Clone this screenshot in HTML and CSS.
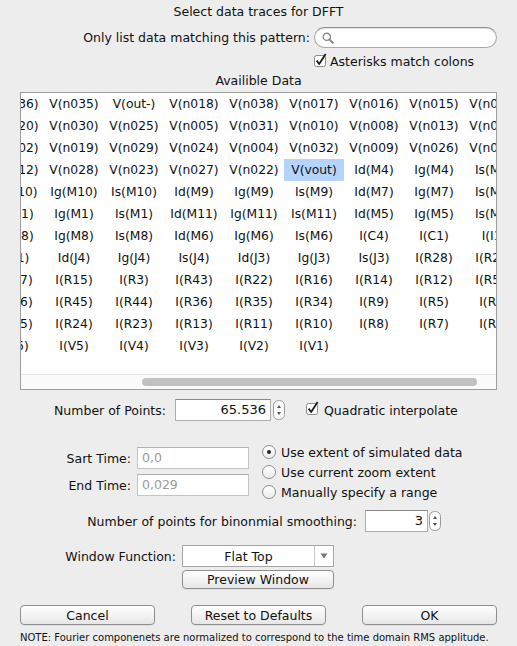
FILE: index.html
```html
<!DOCTYPE html>
<html lang="en">
<head>
  <meta charset="UTF-8" />
  <title>Select data traces for DFFT</title>
  <link rel="stylesheet" href="styles.css">
</head>
<body>
  <div class="dialog">
    <div class="title">Select data traces for DFFT</div>

    <div class="pattern-row">
      <span class="label">Only list data matching this pattern:</span>
      <div class="search">
        <svg width="12" height="12" viewBox="0 0 12 12"><circle cx="4.8" cy="4.8" r="3.6" fill="none" stroke="#8a8a8a" stroke-width="1.4"/><path d="M7.4 7.4 L10.8 10.8" stroke="#8a8a8a" stroke-width="2" stroke-linecap="round"/></svg>
      </div>
    </div>

    <div class="asterisk-row">
      <span class="check"><svg width="14" height="15" viewBox="0 0 14 15"><rect x="0.5" y="2.5" width="11" height="11" rx="2" fill="#fff" stroke="#8c8c8c"/><path d="M2.6 7.6 L5.2 11 L11.6 1" fill="none" stroke="#1c1c1c" stroke-width="1.8" stroke-linejoin="round"/></svg></span>
      <span>Asterisks match colons</span>
    </div>

    <div class="section-label">Availible Data</div>

    <div class="data-box">
      <div class="data-view">
        <div class="data-grid">
          <span>V(n036)</span><span>V(n035)</span><span>V(out-)</span><span>V(n018)</span><span>V(n038)</span><span>V(n017)</span><span>V(n016)</span><span>V(n015)</span><span>V(n014)</span>
          <span>V(n020)</span><span>V(n030)</span><span>V(n025)</span><span>V(n005)</span><span>V(n031)</span><span>V(n010)</span><span>V(n008)</span><span>V(n013)</span><span>V(n011)</span>
          <span>V(n002)</span><span>V(n019)</span><span>V(n029)</span><span>V(n024)</span><span>V(n004)</span><span>V(n032)</span><span>V(n009)</span><span>V(n026)</span><span>V(n003)</span>
          <span>V(n012)</span><span>V(n028)</span><span>V(n023)</span><span>V(n027)</span><span>V(n022)</span><span class="selected">V(vout)</span><span>Id(M4)</span><span>Ig(M4)</span><span>Is(M4)</span>
          <span>Id(M10)</span><span>Ig(M10)</span><span>Is(M10)</span><span>Id(M9)</span><span>Ig(M9)</span><span>Is(M9)</span><span>Id(M7)</span><span>Ig(M7)</span><span>Is(M7)</span>
          <span>Id(M1)</span><span>Ig(M1)</span><span>Is(M1)</span><span>Id(M11)</span><span>Ig(M11)</span><span>Is(M11)</span><span>Id(M5)</span><span>Ig(M5)</span><span>Is(M5)</span>
          <span>Id(M8)</span><span>Ig(M8)</span><span>Is(M8)</span><span>Id(M6)</span><span>Ig(M6)</span><span>Is(M6)</span><span>I(C4)</span><span>I(C1)</span><span>I(I1)</span>
          <span>I(D1)</span><span>Id(J4)</span><span>Ig(J4)</span><span>Is(J4)</span><span>Id(J3)</span><span>Ig(J3)</span><span>Is(J3)</span><span>I(R28)</span><span>I(R27)</span>
          <span>I(R17)</span><span>I(R15)</span><span>I(R3)</span><span>I(R43)</span><span>I(R22)</span><span>I(R16)</span><span>I(R14)</span><span>I(R12)</span><span>I(R50)</span>
          <span>I(R46)</span><span>I(R45)</span><span>I(R44)</span><span>I(R36)</span><span>I(R35)</span><span>I(R34)</span><span>I(R9)</span><span>I(R5)</span><span>I(R1)</span>
          <span>I(R25)</span><span>I(R24)</span><span>I(R23)</span><span>I(R13)</span><span>I(R11)</span><span>I(R10)</span><span>I(R8)</span><span>I(R7)</span><span>I(R6)</span>
          <span>I(V6)</span><span>I(V5)</span><span>I(V4)</span><span>I(V3)</span><span>I(V2)</span><span>I(V1)</span>
        </div>
      </div>
      <div class="hscroll"><div class="thumb"></div></div>
    </div>

    <div class="points-row">
      <span class="label points-label">Number of Points:</span>
      <div class="field points-field">65.536</div>
      <div class="stepper"><svg width="12" height="20" viewBox="0 0 12 20"><rect x="0.5" y="0.5" width="11" height="19" rx="5" fill="#fff" stroke="#9a9a9a"/><path d="M4 8 L6 5 L8 8 Z" fill="#555"/><path d="M4 12 L6 15 L8 12 Z" fill="#555"/></svg></div>
      <span class="check quad-check"><svg width="14" height="15" viewBox="0 0 14 15"><rect x="0.5" y="2.5" width="11" height="11" rx="2" fill="#fff" stroke="#8c8c8c"/><path d="M2.6 7.6 L5.2 11 L11.6 1" fill="none" stroke="#1c1c1c" stroke-width="1.8" stroke-linejoin="round"/></svg></span>
      <span>Quadratic interpolate</span>
    </div>

    <div class="time-section">
      <div class="time-fields">
        <div class="time-row">
          <span class="label time-label">Sart Time:</span>
          <div class="field disabled">0,0</div>
        </div>
        <div class="time-row">
          <span class="label time-label">End Time:</span>
          <div class="field disabled">0,029</div>
        </div>
      </div>
      <div class="radios">
        <div class="radio-row"><span class="radio on"></span>Use extent of simulated data</div>
        <div class="radio-row"><span class="radio"></span>Use current zoom extent</div>
        <div class="radio-row"><span class="radio"></span>Manually specify a range</div>
      </div>
    </div>

    <div class="smooth-row">
      <span class="label smooth-label">Number of points for binonmial smoothing:</span>
      <div class="field smooth-field">3</div>
      <div class="stepper"><svg width="12" height="20" viewBox="0 0 12 20"><rect x="0.5" y="0.5" width="11" height="19" rx="5" fill="#fff" stroke="#9a9a9a"/><path d="M4 8 L6 5 L8 8 Z" fill="#555"/><path d="M4 12 L6 15 L8 12 Z" fill="#555"/></svg></div>
    </div>

    <div class="window-row">
      <span class="label window-label">Window Function:</span>
      <div class="combo">
        <span class="combo-text">Flat Top</span>
        <span class="combo-arrow"><svg width="8" height="6" viewBox="0 0 8 6"><path d="M0.5 0.5 L7.5 0.5 L4 5.5 Z" fill="#777"/></svg></span>
      </div>
    </div>
    <div class="preview-row">
      <button class="btn preview-btn">Preview Window</button>
    </div>

    <div class="button-row">
      <button class="btn">Cancel</button>
      <button class="btn">Reset to Defaults</button>
      <button class="btn">OK</button>
    </div>

    <div class="note">NOTE: Fourier componenets are normalized to correspond to the time domain RMS applitude.</div>
  </div>
</body>
</html>
```

FILE: styles.css
```css
body {
  margin: 0;
  background: #ededed;
  font-family: "DejaVu Sans", Verdana, sans-serif;
  font-size: 12.5px;
  color: #111;
}

.dialog {
  width: 517px;
  height: 646px;
  overflow: hidden;
}

.label {
  white-space: nowrap;
}

.title {
  padding-top: 4px;
  line-height: 16px;
  text-align: center;
}

/* pattern search */
.pattern-row {
  display: flex;
  align-items: center;
  justify-content: flex-end;
  margin-top: 7px;
  padding-right: 20px;
  gap: 4px;
  height: 21px;
}

.search {
  width: 174px;
  height: 19px;
  border: 1px solid #a8a8a8;
  border-top-color: #8e8e8e;
  border-radius: 11px;
  background: #fff;
  box-shadow: inset 0 1px 1px rgba(0,0,0,0.12);
  display: flex;
  align-items: center;
  padding-left: 7px;
  box-sizing: content-box;
}

.search svg {
  display: block;
}

.asterisk-row {
  display: flex;
  align-items: center;
  margin-top: 6px;
  padding-left: 314px;
  height: 15px;
}

.check {
  display: inline-flex;
  width: 16px;
}

.check svg {
  display: block;
  margin-top: -3px;
}

.section-label {
  margin-top: 5px;
  line-height: 14px;
  text-align: center;
}

/* data list */
.data-box {
  margin: 4px 0 0 20px;
  width: 475px;
  height: 296px;
  border: 1px solid #9d9d9d;
  background: #fff;
  display: flex;
  flex-direction: column;
}

.data-view {
  height: 281px;
  overflow: hidden;
}

.data-grid {
  display: grid;
  grid-template-columns: repeat(9, 60px);
  grid-auto-rows: 22px;
  margin-left: -37px;
  width: 540px;
  font-size: 12.3px;
}

.data-grid span {
  text-align: center;
  line-height: 22px;
  white-space: nowrap;
}

.data-grid .selected {
  background: #b5d4fd;
}

.hscroll {
  flex: 1;
  border-top: 1px solid #e6e6e6;
  background: #fafafa;
  position: relative;
}

.thumb {
  position: absolute;
  left: 121px;
  top: 3px;
  width: 335px;
  height: 8px;
  border-radius: 4px;
  background: #c1c1c1;
}

/* fields */
.field {
  height: 20px;
  line-height: 20px;
  border: 1px solid #adadad;
  border-top-color: #8a8a8a;
  background: #fff;
  box-sizing: content-box;
  padding: 0 4px;
  white-space: nowrap;
}

.field.disabled {
  color: #9a9a9a;
  border-color: #c4c4c4;
  border-top-color: #b0b0b0;
}

.stepper svg {
  display: block;
}

.points-row {
  display: flex;
  align-items: center;
  margin-top: 9px;
  height: 22px;
}

.points-label {
  width: 166px;
  text-align: right;
}

.points-field {
  margin-left: 9px;
  width: 86px;
  text-align: right;
  font-size: 13px;
}

.points-row .stepper {
  margin-left: 2px;
}

.quad-check {
  margin-left: 21px;
  width: 18px;
}

/* time range */
.time-section {
  display: flex;
  margin-top: 21px;
}

.time-fields {
  display: flex;
  flex-direction: column;
  gap: 5px;
  margin-top: 5px;
}

.time-row {
  display: flex;
  align-items: center;
}

.time-label {
  width: 131px;
  text-align: right;
}

.time-row .field {
  margin-left: 6px;
  width: 102px;
}

.radios {
  margin-left: 13px;
  display: flex;
  flex-direction: column;
}

.radio-row {
  display: flex;
  align-items: center;
  height: 20px;
}

.radio {
  width: 12px;
  height: 12px;
  border: 1px solid #8e8e8e;
  border-radius: 50%;
  background: linear-gradient(#fff, #ececec);
  margin-right: 5px;
  position: relative;
}

.radio.on::after {
  content: "";
  position: absolute;
  left: 4px;
  top: 4px;
  width: 4px;
  height: 4px;
  border-radius: 50%;
  background: #222;
}

/* smoothing */
.smooth-row {
  display: flex;
  align-items: center;
  margin-top: 8px;
  height: 22px;
}

.smooth-label {
  width: 357px;
  text-align: right;
}

.smooth-field {
  margin-left: 8px;
  width: 53px;
  text-align: right;
  font-size: 13px;
}

.smooth-row .stepper {
  margin-left: 1px;
}

/* window function */
.window-row {
  display: flex;
  align-items: center;
  margin-top: 13px;
  height: 22px;
}

.window-label {
  width: 176px;
  text-align: right;
}

.combo {
  margin-left: 6px;
  width: 150px;
  height: 20px;
  border: 1px solid #a6a6a6;
  background: #fff;
  display: flex;
}

.combo-text {
  flex: 1;
  text-align: center;
  line-height: 21px;
}

.combo-arrow {
  width: 18px;
  border-left: 1px solid #c8c8c8;
  display: flex;
  align-items: center;
  justify-content: center;
}

.preview-row {
  margin-top: 3px;
  padding-left: 182px;
}

.btn {
  font-family: "DejaVu Sans", Verdana, sans-serif;
  font-size: 12.5px;
  color: #111;
  height: 20px;
  padding: 0;
  border: 1px solid #8f8f8f;
  border-radius: 4px;
  background: linear-gradient(#ffffff, #f1f1f1 60%, #e6e6e6);
  box-shadow: 0 1px 0 rgba(0,0,0,0.06);
}

.preview-btn {
  width: 152px;
  height: 19px;
}

.button-row {
  display: flex;
  gap: 36px;
  margin-top: 16px;
  padding-left: 20px;
}

.button-row .btn {
  width: 135px;
}

.note {
  margin-top: 7px;
  padding-left: 20px;
  font-size: 10px;
  line-height: 12px;
  white-space: nowrap;
}
```
